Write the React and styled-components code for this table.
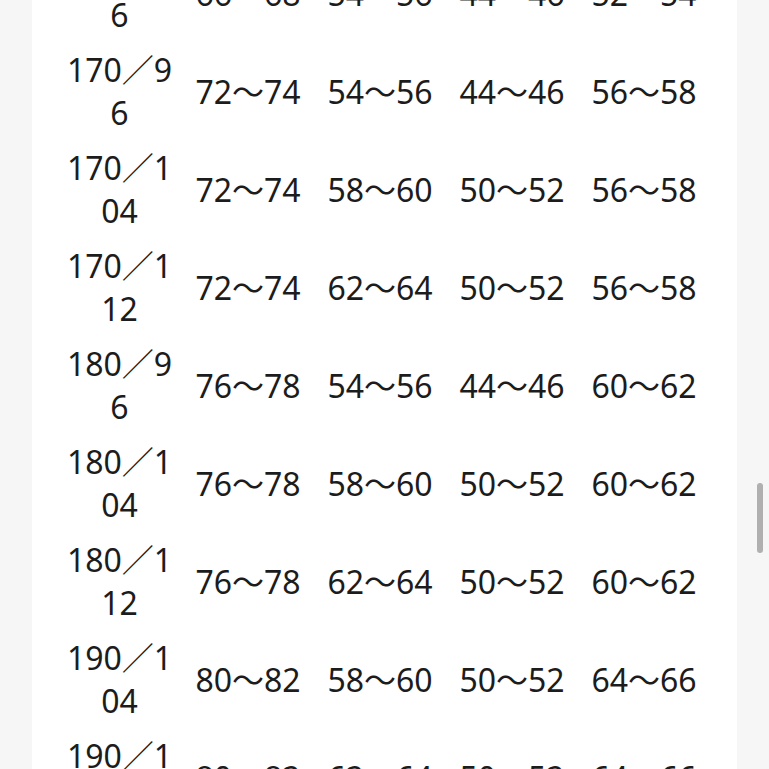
import React from "react";
import styled, { createGlobalStyle } from "styled-components";

const GlobalStyle = createGlobalStyle`
  html, body {
    margin: 0;
    padding: 0;
    height: 100%;
    overflow: hidden;
    background: #f6f6f6;
  }
`;

const Page = styled.div`
  width: 769px;
  height: 769px;
  overflow: hidden;
  position: relative;
  background: #f6f6f6;
`;

// page is scrolled: the first row is partly hidden above the top edge
const Card = styled.div`
  margin: -56px 0 0 32px;
  width: 705px;
  box-sizing: border-box;
  padding: 0 27px 0 25px;
  background: #ffffff;
`;

const Row = styled.div`
  display: grid;
  grid-template-columns: 125px repeat(4, 132px);
  align-items: center;
  height: 98px;
  font-family: "Noto Sans", "Noto Sans CJK SC", sans-serif;
  font-size: 32px;
  line-height: 43px;
  color: #1c1c1c;
`;

const SizeCell = styled.div`
  box-sizing: border-box;
  padding: 0 8px;
  text-align: center;
  word-break: break-all;
`;

const Cell = styled.div`
  text-align: center;
  white-space: nowrap;
`;

const Scrollbar = styled.div`
  position: absolute;
  left: 757px;
  top: 483px;
  width: 6px;
  height: 70px;
  border-radius: 3px;
  background: #b0b0b0;
`;

const rows = [
  ["160／96", "66～68", "54～56", "44～46", "52～54"],
  ["170／96", "72～74", "54～56", "44～46", "56～58"],
  ["170／104", "72～74", "58～60", "50～52", "56～58"],
  ["170／112", "72～74", "62～64", "50～52", "56～58"],
  ["180／96", "76～78", "54～56", "44～46", "60～62"],
  ["180／104", "76～78", "58～60", "50～52", "60～62"],
  ["180／112", "76～78", "62～64", "50～52", "60～62"],
  ["190／104", "80～82", "58～60", "50～52", "64～66"],
  ["190／112", "80～82", "62～64", "50～52", "64～66"],
];

export default function App() {
  return (
    <Page>
      <GlobalStyle />
      <Card>
        {rows.map(([size, ...vals]) => (
          <Row key={size}>
            <SizeCell>{size}</SizeCell>
            {vals.map((v, i) => (
              <Cell key={i}>{v}</Cell>
            ))}
          </Row>
        ))}
      </Card>
      <Scrollbar />
    </Page>
  );
}
